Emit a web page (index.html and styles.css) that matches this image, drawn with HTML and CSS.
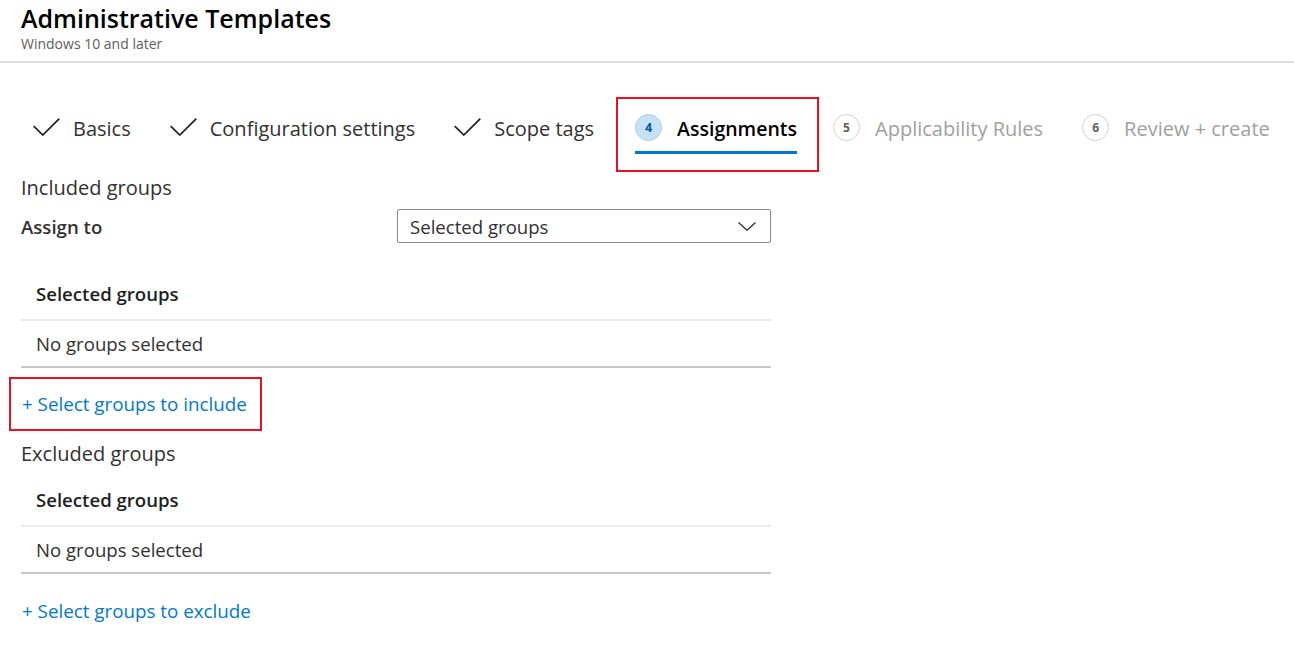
FILE: index.html
```html
<!DOCTYPE html>
<html lang="en">
<head>
<meta charset="utf-8">
<title>Administrative Templates</title>
<link rel="stylesheet" href="styles.css">
</head>
<body>
<header class="blade-header">
  <h1 class="title">Administrative Templates</h1>
  <div class="subtitle">Windows 10 and later</div>
</header>

<nav class="wizard">
  <div class="step">
    <svg class="check" viewBox="0 0 27 18" width="27" height="18"><path d="M0.7 8.2 L9.8 17 L26.3 0.7" fill="none" stroke="#201f1e" stroke-width="1.7"/></svg>
    <span class="step-label">Basics</span>
  </div>
  <div class="step">
    <svg class="check" viewBox="0 0 27 18" width="27" height="18"><path d="M0.7 8.2 L9.8 17 L26.3 0.7" fill="none" stroke="#201f1e" stroke-width="1.7"/></svg>
    <span class="step-label">Configuration settings</span>
  </div>
  <div class="step">
    <svg class="check" viewBox="0 0 27 18" width="27" height="18"><path d="M0.7 8.2 L9.8 17 L26.3 0.7" fill="none" stroke="#201f1e" stroke-width="1.7"/></svg>
    <span class="step-label">Scope tags</span>
  </div>
  <div class="step-highlight">
    <div class="step current">
      <span class="num num-current">4</span>
      <span class="step-label">Assignments</span>
    </div>
  </div>
  <div class="step todo">
    <span class="num">5</span>
    <span class="step-label">Applicability Rules</span>
  </div>
  <div class="step todo">
    <span class="num">6</span>
    <span class="step-label">Review + create</span>
  </div>
</nav>

<main class="content">
  <div class="section-title">Included groups</div>
  <div class="assign-row">
    <label class="assign-label">Assign to</label>
    <div class="dropdown">
      <span>Selected groups</span>
      <svg class="chevron" viewBox="0 0 18 9" width="18" height="9"><path d="M0.5 0.5 L9 8.3 L17.5 0.5" fill="none" stroke="#323130" stroke-width="1.3"/></svg>
    </div>
  </div>

  <div class="grid grid-include">
    <div class="grid-head">Selected groups</div>
    <div class="grid-row">No groups selected</div>
  </div>
  <div class="link-highlight">
    <a class="add-link" href="#">+ Select groups to include</a>
  </div>

  <div class="section-title excluded">Excluded groups</div>
  <div class="grid grid-exclude">
    <div class="grid-head">Selected groups</div>
    <div class="grid-row">No groups selected</div>
  </div>
  <a class="add-link exclude" href="#">+ Select groups to exclude</a>
</main>
</body>
</html>
```

FILE: styles.css
```css
* { box-sizing: border-box; }
body {
  margin: 0;
  background: #ffffff;
  font-family: "Open Sans", "Noto Sans", sans-serif;
  color: #323130;
}

/* Header */
.blade-header {
  padding: 1px 0 9px 21px;
  border-bottom: 2px solid #e1dfdd;
}
.title {
  margin: 0;
  font-size: 25px;
  font-weight: 600;
  line-height: 34px;
  color: #000000;
}
.subtitle {
  font-size: 14px;
  line-height: 17px;
  color: #605e5c;
}

/* Wizard steps */
.wizard {
  display: flex;
  align-items: flex-start;
  margin-top: 34px;
  height: 75px;
  padding-left: 33px;
}
.step {
  display: flex;
  align-items: center;
  height: 62px;
  margin-right: 39px;
  flex: none;
}
.check { margin-right: 13px; flex: none; margin-top: -2px; }
.step-label {
  font-size: 20px;
  color: #323130;
  white-space: nowrap;
}
.step-highlight {
  border: 2px solid #e81123;
  height: 75px;
  padding: 0 20px 0 17px;
  margin: 0 14px 0 -17px;
  flex: none;
}
.step.current {
  margin: 0;
  height: 55px;
  padding-top: 6px;
  border-bottom: 3px solid #0078d4;
}
.step.current .step-label {
  font-size: 19.5px;
  font-weight: 600;
  color: #000000;
}
.num {
  width: 27px;
  height: 27px;
  border-radius: 50%;
  border: 1px solid #d2d0ce;
  display: inline-flex;
  align-items: center;
  justify-content: center;
  font-size: 12px;
  font-weight: 700;
  color: #605e5c;
  margin-right: 15px;
  margin-top: -2px;
  flex: none;
}
.num-current {
  background: #c7e0f4;
  border-color: #a6cdef;
  color: #005a9e;
  font-size: 12.5px;
}
.step.todo .step-label { color: #a19f9d; }

/* Content */
.content {
  padding-left: 21px;
  width: 771px;
}
.section-title {
  font-size: 20px;
  line-height: 28px;
  color: #323130;
  margin-top: 2px;
}
.section-title.excluded { margin-top: 9px; }
.assign-row {
  display: flex;
  align-items: center;
  justify-content: space-between;
  margin-top: 7px;
}
.assign-label {
  font-size: 18.6px;
  font-weight: 600;
  color: #323130;
}
.dropdown {
  width: 374px;
  height: 34px;
  border: 1px solid #8a8886;
  border-radius: 2px;
  display: flex;
  align-items: center;
  justify-content: space-between;
  padding: 0 14px 0 12px;
  font-size: 18.6px;
  color: #323130;
}
.chevron { flex: none; }

.grid-include { margin-top: 25px; }
.grid-exclude { margin-top: 6px; }
.grid-head {
  padding: 0 15px;
  height: 53px;
  line-height: 51px;
  font-size: 18.6px;
  font-weight: 600;
  border-bottom: 2px solid #edebe9;
  color: #201f1e;
}
.grid-row {
  padding: 0 15px;
  height: 47px;
  line-height: 45px;
  font-size: 18.6px;
  color: #323130;
  border-bottom: 2px solid #c8c6c4;
}

.link-highlight {
  margin: 9px 0 0 -12px;
  width: 253px;
  height: 54px;
  border: 2px solid #e81123;
  display: flex;
  align-items: center;
  padding-left: 11px;
}
.add-link {
  font-size: 18.8px;
  line-height: 26px;
  color: #0078d4;
  text-decoration: none;
}
.add-link.exclude {
  display: block;
  margin: 24px 0 0 1px;
}
```
